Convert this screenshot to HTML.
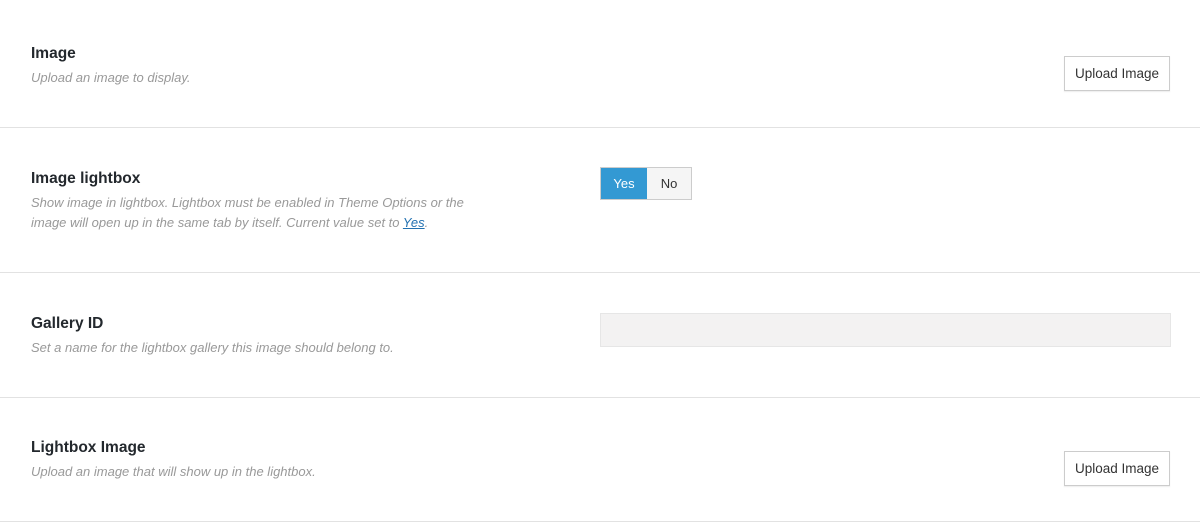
<!DOCTYPE html>
<html><head><style>
*{margin:0;padding:0;box-sizing:border-box}
body{width:1200px;height:523px;background:#fff;font-family:"Liberation Sans",sans-serif;position:relative;overflow:hidden}
.t{position:absolute;left:31px;font-size:15.5px;font-weight:bold;color:#23282d}
.d{position:absolute;left:31px;font-size:13px;font-style:italic;color:#999;line-height:20px}
.d a{color:#2271b1}
.hr{position:absolute;left:0;width:1200px;height:1px;background:#e2e2e2}
.btn{position:absolute;left:1064px;width:106px;height:35px;border:1px solid #ccc;background:#fff;font-size:13.5px;color:#333;text-align:center;line-height:33px;box-shadow:0 1px 1px rgba(0,0,0,.08)}
</style></head><body>
<div class="t" style="top:45px">Image</div>
<div class="d" style="top:68px">Upload an image to display.</div>
<div class="btn" style="top:56px">Upload Image</div>
<div class="hr" style="top:127px"></div>

<div class="t" style="top:170px">Image lightbox</div>
<div class="d" style="top:193px;width:460px">Show image in lightbox. Lightbox must be enabled in Theme Options or the image will open up in the same tab by itself. Current value set to <a href="#">Yes</a>.</div>
<div style="position:absolute;left:600px;top:167px;width:92px;height:33px;border:1px solid #ccc;display:flex;font-size:13px">
<div style="width:46px;background:#3399d3;color:#fff;text-align:center;line-height:31px">Yes</div>
<div style="flex:1;background:#f5f5f5;color:#333;text-align:center;line-height:31px">No</div></div>
<div class="hr" style="top:272px"></div>

<div class="t" style="top:315px">Gallery ID</div>
<div class="d" style="top:338px">Set a name for the lightbox gallery this image should belong to.</div>
<div style="position:absolute;left:600px;top:313px;width:571px;height:34px;background:#f3f2f2;border:1px solid #e6e6e6"></div>
<div class="hr" style="top:397px"></div>

<div class="t" style="top:439px">Lightbox Image</div>
<div class="d" style="top:462px">Upload an image that will show up in the lightbox.</div>
<div class="btn" style="top:451px">Upload Image</div>
<div class="hr" style="top:521px"></div>
</body></html>
